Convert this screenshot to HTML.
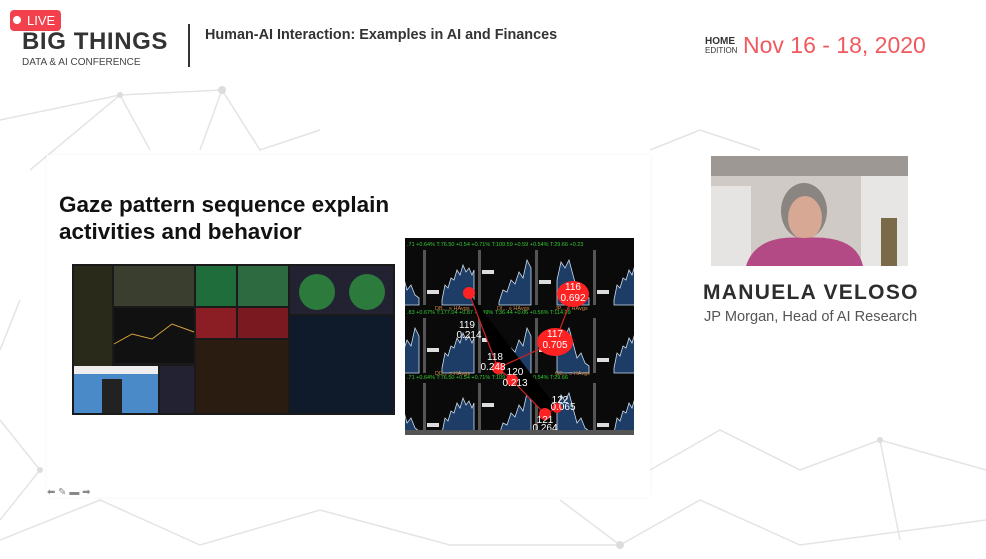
<!DOCTYPE html>
<html><head><meta charset="utf-8"><style>
*{margin:0;padding:0;box-sizing:border-box}
body{width:986px;height:559px;overflow:hidden;background:#fff;font-family:"Liberation Sans",sans-serif;position:relative}
.abs{position:absolute;white-space:nowrap}
</style></head><body>
<svg class="abs" style="left:0;top:0" width="986" height="559">
<g stroke="#e4e4e4" stroke-width="1.5" fill="none">
<polyline points="0,120 120,95 222,90 260,150 320,130"/>
<polyline points="30,170 120,95 150,150"/>
<polyline points="222,90 200,150"/>
<polyline points="0,420 40,470 0,520"/>
<polyline points="650,150 700,130 760,150"/>
<polyline points="650,470 720,430 800,470 880,440 986,470"/>
<polyline points="0,540 100,500 200,545 320,510 450,545 620,545 700,500 800,545 986,520"/>
<polyline points="880,440 900,540"/>
<polyline points="20,300 0,350"/>
<polyline points="620,545 560,500"/>
</g>
<g fill="#dcdcdc"><circle cx="222" cy="90" r="4"/><circle cx="120" cy="95" r="3"/><circle cx="620" cy="545" r="4"/><circle cx="880" cy="440" r="3"/><circle cx="40" cy="470" r="3"/></g>
</svg>
<div class="abs" style="left:10px;top:10px;width:51px;height:21px;background:#f2414d;border-radius:4px;color:#fff;font-size:13px;line-height:21px;padding-left:17px">LIVE</div>
<div class="abs" style="left:13px;top:16px;width:8px;height:8px;border-radius:50%;background:#fff"></div>
<div class="abs" style="left:22px;top:28px;font-size:24px;font-weight:bold;color:#333;letter-spacing:0.6px">BIG THINGS</div>
<div class="abs" style="left:22px;top:57px;font-size:10px;color:#444">DATA &amp; AI CONFERENCE</div>
<div class="abs" style="left:188px;top:24px;width:2px;height:43px;background:#333"></div>
<div class="abs" style="left:205px;top:27px;font-size:14.4px;font-weight:bold;color:#333">Human-AI Interaction: Examples in AI and Finances</div>
<div class="abs" style="left:705px;top:37px;font-size:10px;font-weight:bold;color:#333;line-height:9px">HOME<br><span style="font-weight:normal;font-size:8px">EDITION</span></div>
<div class="abs" style="left:743px;top:32px;font-size:23px;color:#ef5a5f">Nov 16 - 18, 2020</div>
<div class="abs" style="left:47px;top:155px;width:603px;height:342px;background:#fff;box-shadow:0 0 6px rgba(0,0,0,0.04)"></div>
<div class="abs" style="left:59px;top:191px;font-size:22.5px;font-weight:bold;color:#111;line-height:27px">Gaze pattern sequence explain<br>activities and behavior</div>
<svg class="abs" style="left:72px;top:264px" width="323" height="151">
<rect width="323" height="151" fill="#1a1a1a"/>
<rect x="2" y="2" width="38" height="100" fill="#2a2a1a"/>
<rect x="42" y="2" width="80" height="40" fill="#3a3e2e"/>
<rect x="124" y="2" width="40" height="40" fill="#1f6d3a"/>
<rect x="124" y="44" width="40" height="30" fill="#8a1e24"/>
<rect x="166" y="2" width="50" height="40" fill="#2d6a40"/>
<rect x="166" y="44" width="50" height="30" fill="#7a1a20"/>
<rect x="218" y="2" width="103" height="48" fill="#223"/>
<circle cx="245" cy="28" r="18" fill="#2c7a3c"/><circle cx="295" cy="28" r="18" fill="#2c7a3c"/>
<rect x="42" y="44" width="80" height="55" fill="#111"/>
<polyline points="42,80 60,70 80,75 100,60 122,68" stroke="#d9a43a" fill="none"/>
<rect x="124" y="76" width="92" height="73" fill="#2a1c10"/>
<rect x="218" y="52" width="103" height="97" fill="#0f1a2a"/>
<rect x="2" y="102" width="84" height="47" fill="#4a8ac9"/>
<rect x="2" y="102" width="84" height="8" fill="#eee"/>
<rect x="30" y="115" width="20" height="34" fill="#222"/>
<rect x="88" y="102" width="34" height="47" fill="#223"/>
</svg>
<svg class="abs" style="left:405px;top:238px" width="229" height="197">
<defs>
<g id="pa"><path d="M0,50 L3,35 L6,38 L9,28 L12,30 L15,20 L18,25 L21,15 L24,22 L27,18 L30,25 L32,20 L32,55 L0,55Z" fill="#1d3d66" stroke="#cde" stroke-width="0.8"/><rect x="36" y="0" width="3" height="55" fill="#555"/><rect x="40" y="20" width="12" height="4" fill="#ddd"/></g>
<g id="pb"><path d="M0,52 L4,40 L8,42 L12,30 L16,34 L20,22 L24,28 L28,10 L32,18 L32,55 L0,55Z" fill="#1d3d66" stroke="#cde" stroke-width="0.8"/><rect x="36" y="0" width="3" height="55" fill="#555"/><rect x="40" y="30" width="12" height="4" fill="#ddd"/></g>
<g id="pc"><path d="M0,30 L4,12 L8,18 L12,10 L16,25 L20,40 L24,35 L28,45 L32,48 L32,55 L0,55Z" fill="#1d3d66" stroke="#cde" stroke-width="0.8"/><rect x="36" y="0" width="3" height="55" fill="#555"/><rect x="40" y="40" width="12" height="4" fill="#ddd"/></g>
</defs>
<rect width="229" height="197" fill="#0a0a0a"/>
<g>
<use href="#pc" x="-18" y="12"/><use href="#pa" x="37" y="12"/><use href="#pb" x="94" y="12"/><use href="#pc" x="152" y="12"/><use href="#pa" x="209" y="12"/>
<use href="#pb" x="-18" y="80"/><use href="#pa" x="37" y="80"/><use href="#pb" x="94" y="80"/><use href="#pc" x="152" y="80"/><use href="#pa" x="209" y="80"/>
<use href="#pc" x="-18" y="145"/><use href="#pa" x="37" y="145"/><use href="#pb" x="94" y="145"/><use href="#pc" x="152" y="145"/><use href="#pa" x="209" y="145"/>
</g>
<g font-size="5.5" fill="#3c3"><text x="2" y="8">.71 +0.64%  T:76.50 +0.54 +0.71%  T:109.59 +0.59 +0.54%  T:29.66 +0.23</text>
<text x="2" y="76">.83 +0.67%  T:177.04 +0.87 +0.49%  T:36.44 +0.06 +0.56%  T:114.09</text>
<text x="2" y="141">.71 +0.64%  T:76.50 +0.54 +0.71%  T:109.59 +0.59 +0.54%  T:29.66</text></g>
<g font-size="5.5" fill="#c84"><text x="30" y="72">DB... ≡ HAvgs</text><text x="92" y="72">DI... ≡ HAvgs</text><text x="150" y="72">JP... ≡ HAvgs</text><text x="30" y="137">DD... ≡ HAvgs</text><text x="92" y="137">DI... ≡ HAvgs</text><text x="150" y="137">GE... ≡ HAvgs</text></g>
<g stroke="#c22" stroke-width="1.2"><polyline points="64,55 93,130 107,142 140,176 152,170"/><line x1="93" y1="130" x2="150" y2="104"/><line x1="150" y1="104" x2="168" y2="57"/></g>
<g fill="#f22"><ellipse cx="168" cy="56" rx="16" ry="13"/><ellipse cx="150" cy="104" rx="18" ry="14"/><circle cx="64" cy="55" r="6"/><circle cx="93" cy="130" r="6"/><circle cx="107" cy="142" r="6"/><circle cx="140" cy="176" r="6"/><circle cx="152" cy="170" r="5"/></g>
<g fill="#fff" font-size="10" text-anchor="middle"><text x="168" y="52">116</text><text x="168" y="63">0.692</text><text x="150" y="99">117</text><text x="150" y="110">0.705</text><text x="62" y="90">119</text><text x="64" y="100">0.214</text><text x="90" y="122">118</text><text x="88" y="132">0.248</text><text x="110" y="137">120</text><text x="110" y="148">0.213</text><text x="155" y="165">122</text><text x="158" y="172">0.065</text><text x="140" y="185">121</text><text x="140" y="193">0.264</text></g>
<rect x="0" y="192" width="229" height="5" fill="#555"/>
</svg>
<div class="abs" style="left:47px;top:487px;font-size:10px;color:#888">⬅ ✎ ▬ ➡</div>
<svg class="abs" style="left:711px;top:156px" width="197" height="110">
<rect width="197" height="110" fill="#cfcac6"/>
<rect width="197" height="20" fill="#9d9894"/>
<rect x="0" y="30" width="40" height="80" fill="#e6e4e2"/>
<rect x="150" y="20" width="47" height="90" fill="#e8e6e4"/>
<rect x="170" y="62" width="16" height="48" fill="#7a6a4a"/>
<ellipse cx="93" cy="55" rx="23" ry="28" fill="#8a8580"/>
<ellipse cx="94" cy="62" rx="17" ry="22" fill="#d7a894"/>
<path d="M35,110 Q45,78 93,82 Q145,78 152,110Z" fill="#b34a86"/>
</svg>
<div class="abs" style="left:703px;top:281px;font-size:21px;font-weight:bold;color:#2d2d2d;letter-spacing:1.3px">MANUELA VELOSO</div>
<div class="abs" style="left:704px;top:309px;font-size:14.6px;color:#555">JP Morgan, Head of AI Research</div>
</body></html>
